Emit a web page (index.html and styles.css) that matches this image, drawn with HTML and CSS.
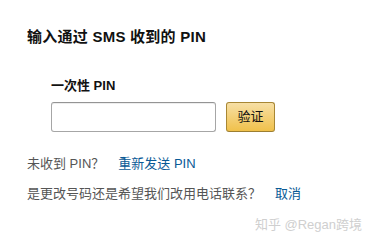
FILE: index.html
```html
<!DOCTYPE html>
<html lang="zh-CN">
<head>
<meta charset="utf-8">
<link rel="stylesheet" href="styles.css">
</head>
<body>
<main class="page">
  <h1 class="title">输入通过 SMS 收到的 PIN</h1>
  <section class="form">
    <label class="label" for="pin">一次性 PIN</label>
    <div class="row">
      <input id="pin" class="input" type="text">
      <button class="btn" type="button">验证</button>
    </div>
  </section>
  <p class="line line-first">未收到 PIN？<a class="link" href="#">重新发送 PIN</a></p>
  <p class="line">是更改号码还是希望我们改用电话联系？<a class="link" href="#">取消</a></p>
  <div class="watermark">知乎 @Regan跨境</div>
</main>
</body>
</html>
```

FILE: styles.css
```css
html, body {
  margin: 0;
  padding: 0;
  background: #fff;
}
body {
  font-family: "Liberation Sans", Arial, "Noto Sans CJK SC", sans-serif;
  font-size: 13px;
  color: #333;
}
.page {
  padding: 27px 0 0 27px;
  display: flex;
  flex-direction: column;
}
.title {
  margin: 0;
  font-size: 15px;
  line-height: 20px;
  font-weight: bold;
  letter-spacing: 0.25px;
  color: #111;
}
.form {
  margin: 31px 0 0 24px;
  display: flex;
  flex-direction: column;
}
.label {
  font-size: 13px;
  line-height: 16px;
  font-weight: bold;
  color: #111;
}
.row {
  margin-top: 8px;
  display: flex;
  align-items: center;
  gap: 10px;
}
.input {
  box-sizing: border-box;
  width: 165px;
  height: 30px;
  margin: 0;
  border: 1px solid #a6a6a6;
  border-top-color: #949494;
  border-radius: 3px;
  background: #fff;
  box-shadow: 0 1px 0 rgba(255,255,255,.5), 0 1px 0 rgba(0,0,0,.07) inset;
}
.btn {
  box-sizing: border-box;
  width: 49px;
  height: 30px;
  margin: 0;
  padding: 0;
  border: 1px solid #a88734;
  border-bottom-color: #9c7e31;
  border-radius: 3px;
  background: linear-gradient(to bottom, #f7dfa5, #f0c14b);
  font-family: "Liberation Sans", Arial, "Noto Sans CJK SC", sans-serif;
  font-size: 13px;
  color: #111;
  line-height: 28px;
}
.line {
  margin: 12px 0 0;
  line-height: 18px;
  color: #555;
}
.line-first {
  margin-top: 23px;
}
.link {
  margin-left: 14px;
  color: #0a5a96;
  text-decoration: none;
}
.watermark {
  margin-top: 13px;
  align-self: flex-end;
  margin-right: 11px;
  line-height: 18px;
  font-size: 13px;
  color: #cfcfcf;
}
```
